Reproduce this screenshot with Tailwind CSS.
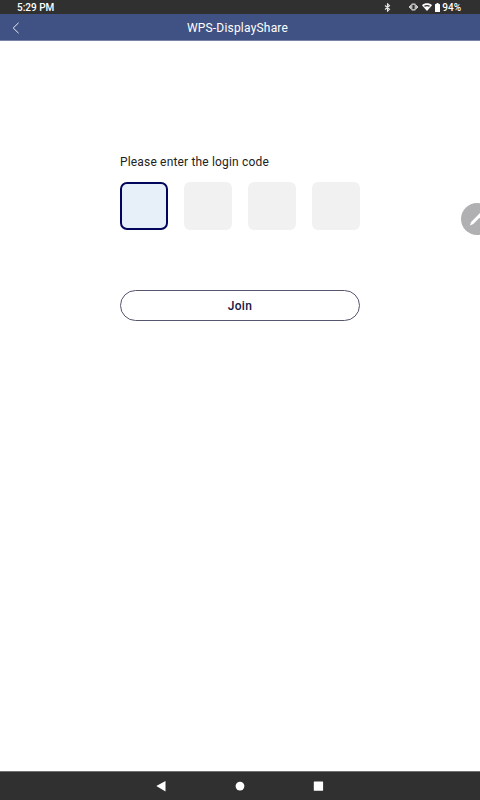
<!DOCTYPE html>
<html lang="en">
<head>
    <meta charset="UTF-8">
    <meta name="viewport" content="width=device-width, initial-scale=1.0">
    <title>WPS-DisplayShare</title>
    <script src="https://cdn.jsdelivr.net/npm/@tailwindcss/browser@4"></script>
</head>
<body class="bg-white font-['Roboto',sans-serif] overflow-hidden">
    <div class="relative flex flex-col h-[800px] w-[480px] overflow-hidden">
        <!-- Status bar -->
        <div class="flex h-[14px] shrink-0 items-center justify-between bg-[#303030] pt-[2px] pl-[17px] pr-[19px] text-[10px] font-medium leading-[12px] text-white">
            <span>5:29 PM</span>
            <div class="flex items-center">
                <div class="flex items-center pb-[2px]">
                    <svg class="mr-[18px] h-[9px] w-[7px]" viewBox="0 0 7 9" fill="none" stroke="#e6e6e6" stroke-width="1.1"><path d="M1 2.5 5.5 6.3 3.5 8.2V.8L5.5 2.7 1 6.5"/></svg>
                    <svg class="mr-[4px] h-[8px] w-[9px]" viewBox="0 0 10 8" preserveAspectRatio="none" fill="none" stroke="#ddd"><rect x="3.1" y="1.1" width="3.8" height="5.8" rx=".6" stroke-width="1.2"/><path d="M1.8 2v4M8.2 2v4M.5 3v2M9.5 3v2" stroke-width="1"/></svg>
                    <svg class="mr-[3px] h-[8px] w-[10px]" viewBox="0 0 10 8"><path d="M5 8 0 2.2C2.6-.3 7.4-.3 10 2.2Z" fill="#fff"/><path d="M2 2.8C3.8 1.6 6.2 1.6 8 2.8L7.2 3.8C5.8 3 4.2 3 2.8 3.8Z" fill="#303030"/></svg>
                    <svg class="mr-[2px] h-[9px] w-[5px]" viewBox="0 0 5 9" fill="#fff"><path d="M1.5 0h2v1H4.5a.5.5 0 0 1 .5.5v7a.5.5 0 0 1-.5.5h-4a.5.5 0 0 1-.5-.5v-7A.5.5 0 0 1 .5 1h1z"/></svg>
                </div>
                <span>94%</span>
            </div>
        </div>

        <!-- Title bar -->
        <header class="grid h-[27px] shrink-0 grid-cols-[1fr_auto_1fr] items-center border-b border-[#7983a5] bg-[#405283] pr-[5px] text-white">
            <button class="pt-0.5 pl-3" aria-label="Back">
                <svg class="h-3 w-2" viewBox="0 0 8 12" fill="none" stroke="#e8ebf3" stroke-width="1"><path d="M6.6.8 1.2 6l5.4 5.2"/></svg>
            </button>
            <h1 class="pt-[2px] text-[12px] leading-[24px] tracking-[0.2px]">WPS-DisplayShare</h1>
        </header>

        <!-- Login code form -->
        <main class="flex-1 px-[120px] pt-[113px]">
            <p class="text-[12px] leading-4 tracking-[0.17px] text-[#222]">Please enter the login code</p>
            <div class="mt-3 flex gap-4">
                <div class="size-12 rounded-[7px] border-2 border-[#02055c] bg-[#e7eff9]"></div>
                <div class="size-12 rounded-[6px] bg-[#f1f1f1]"></div>
                <div class="size-12 rounded-[6px] bg-[#f1f1f1]"></div>
                <div class="size-12 rounded-[6px] bg-[#f1f1f1]"></div>
            </div>
            <button class="mt-[60px] h-[31px] w-full rounded-full border border-[#55566f] pt-[2px] text-[12px] font-medium leading-[27px] tracking-[0.3px] text-[#14153f]">Join</button>
        </main>

        <!-- Floating pen button, partly off screen -->
        <button class="absolute left-[461px] top-[203px] size-8 rounded-full bg-[#b0b0b3]" aria-label="Pen">
            <svg class="size-8" viewBox="0 0 32 32" fill="#fff"><path d="m9 22.5 1.1-3.5L20 8.9l2.2 2.2-9.9 10z"/></svg>
        </button>

        <!-- Navigation bar -->
        <nav class="flex h-[29px] shrink-0 items-center justify-center border-t border-[#717171] bg-[#303030]">
            <svg class="h-[29px] w-[200px]" viewBox="0 0 200 29" fill="#fff"><path d="M16.3 14 25.5 9v10.4z"/><circle cx="100" cy="14.1" r="4.4"/><rect x="173.8" y="9.5" width="9.3" height="9.2" rx=".4"/></svg>
        </nav>
    </div>
</body>
</html>
